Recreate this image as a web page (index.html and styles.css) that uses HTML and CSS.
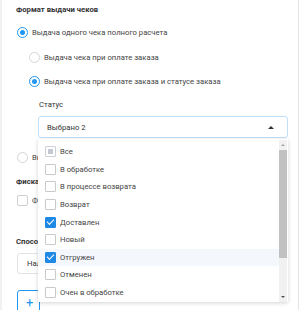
FILE: index.html
```html
<!DOCTYPE html>
<html lang="ru">
<head>
  <meta charset="UTF-8">
  <title>Формат выдачи чеков</title>
  <link rel="stylesheet" href="styles.css">
</head>
<body>

<div class="panel">
  <div class="section-title">Формат выдачи чеков</div>

  <!-- Формат -->
  <label class="radio-row first">
    <span class="radio checked"></span>
    <span>Выдача одного чека полного расчета</span>
  </label>

  <div class="nested">
    <label class="radio-row">
      <span class="radio"></span>
      <span>Выдача чека при оплате заказа</span>
    </label>
    <label class="radio-row">
      <span class="radio checked"></span>
      <span>Выдача чека при оплате заказа и статусе заказа</span>
    </label>

    <div class="field-label">Статус</div>
    <div class="select-wrap">
      <div class="select">
        <span>Выбрано 2</span>
        <span class="caret-up"></span>
      </div>

      <div class="dropdown">
        <div class="options">
          <div class="option"><span class="check partial"></span>Все</div>
          <div class="option"><span class="check"></span>В обработке</div>
          <div class="option"><span class="check"></span>В процессе возврата</div>
          <div class="option"><span class="check"></span>Возврат</div>
          <div class="option"><span class="check on"></span>Доставлен</div>
          <div class="option"><span class="check"></span>Новый</div>
          <div class="option hover"><span class="check on"></span>Отгружен</div>
          <div class="option"><span class="check"></span>Отменен</div>
          <div class="option"><span class="check"></span>Очен в обработке</div>
        </div>
        <div class="scrollbar">
          <span class="sb-arrow up"></span>
          <div class="sb-thumb"></div>
          <span class="sb-arrow down"></span>
        </div>
      </div>
    </div>
  </div>

  <label class="radio-row after-select">
    <span class="radio"></span>
    <span>Выдача двух чеков</span>
  </label>

  <div class="section-title small">Фискализация</div>
  <label class="radio-row">
    <span class="box"></span>
    <span>Фискализировать возвраты</span>
  </label>

  <div class="section-title small pay">Способ оплаты</div>
  <div class="input">Наличные</div>

  <button class="add-btn">+</button>
</div>

</body>
</html>
```

FILE: styles.css
```css
* { margin: 0; padding: 0; box-sizing: border-box; }

html, body {
  font-family: Roboto, "Liberation Sans", sans-serif;
  font-size: 7.7px;
  color: #444;
  background: #fff;
  height: 100%;
  overflow: hidden;
}

.panel {
  width: 299px;
  height: 310px;
  padding: 0 15px 0 15px;
  border-left: 2px solid #f1f1f1;
  border-right: 1px solid #e4e4e4;
}

.section-title {
  height: 20px;
  line-height: 20px;
  font-weight: 700;
  color: #333;
  margin-left: -1px;
}

.section-title.small {
  margin-top: 7px;
  height: 12px;
  line-height: 12px;
}

.section-title.pay { margin-top: 24px; }

.radio-row {
  display: flex;
  align-items: center;
  gap: 4px;
  height: 24px;
  white-space: nowrap;
}

.radio-row.first { height: 25px; }
.radio-row.after-select { margin-top: 7px; }

.radio {
  width: 11px;
  height: 11px;
  border-radius: 50%;
  border: 1px solid #d5d5d5;
  background: #fff;
  flex: none;
  display: flex;
  align-items: center;
  justify-content: center;
}

.radio.checked { border-color: #2196f3; }

.radio.checked::after {
  content: "";
  width: 5px;
  height: 5px;
  border-radius: 50%;
  background: #2196f3;
}

.box {
  width: 11px;
  height: 11px;
  border: 1px solid #cfcfcf;
  border-radius: 2px;
  flex: none;
}

.nested { padding-left: 12px; }

.field-label {
  margin-top: 6px;
  padding-left: 10px;
  line-height: 12px;
  height: 12px;
  color: #333;
}

.select-wrap {
  position: relative;
  margin-top: 5px;
  margin-left: 9px;
  width: 250px;
}

.select {
  height: 22px;
  border: 1px solid #bfdffa;
  border-radius: 3px;
  display: flex;
  align-items: center;
  justify-content: space-between;
  padding: 0 13px 0 8px;
  color: #333;
}

.caret-up {
  width: 0;
  height: 0;
  border-left: 3px solid transparent;
  border-right: 3px solid transparent;
  border-bottom: 3px solid #333;
}

/* выпадающий список */
.dropdown {
  position: absolute;
  top: 23px;
  left: 0;
  width: 250px;
  height: 163px;
  background: #fff;
  box-shadow: 0 1px 4px rgba(0, 0, 0, 0.18);
  display: flex;
  z-index: 10;
}

.options {
  flex: 1;
  padding-top: 4px;
  overflow: hidden;
}

.option {
  height: 17.6px;
  display: flex;
  align-items: center;
  gap: 4px;
  padding-left: 7px;
  color: #444;
  white-space: nowrap;
}

.option.hover { background: #f4f7fb; }

.check {
  width: 11px;
  height: 11px;
  border: 1px solid #c9c9c9;
  border-radius: 1px;
  background: #fff;
  flex: none;
  display: flex;
  align-items: center;
  justify-content: center;
}

.check.partial { border-color: #cdd0d6; }

.check.partial::after {
  content: "";
  width: 5px;
  height: 5px;
  background: #c3c8d2;
}

.check.on {
  background: #1e88e5;
  border-color: #1e88e5;
}

.check.on::after {
  content: "";
  width: 6px;
  height: 3px;
  border-left: 1.5px solid #fff;
  border-bottom: 1.5px solid #fff;
  transform: translateY(-1px) rotate(-45deg);
}

.scrollbar {
  width: 8px;
  margin: 1px 1px 0 0;
  background: #f1f1f1;
  display: flex;
  flex-direction: column;
  align-items: center;
}

.sb-arrow {
  width: 0;
  height: 0;
  margin: 4px 0;
  border-left: 2px solid transparent;
  border-right: 2px solid transparent;
}

.sb-arrow.up { border-bottom: 2px solid #a3a3a3; }
.sb-arrow.down { border-top: 2px solid #505050; margin-top: auto; }

.sb-thumb {
  width: 8px;
  height: 108px;
  background: #c1c1c1;
}

.input {
  margin-top: 5px;
  height: 21px;
  border: 1px solid #e3e3e3;
  border-radius: 3px;
  padding-left: 9px;
  line-height: 19px;
  color: #333;
}

.add-btn {
  margin-top: 16px;
  width: 23px;
  height: 26px;
  border: 1px solid #2196f3;
  border-radius: 3px;
  background: #fff;
  color: #2196f3;
  font-family: inherit;
  font-size: 13px;
  line-height: 22px;
  text-align: left;
  padding-left: 8px;
}
```
